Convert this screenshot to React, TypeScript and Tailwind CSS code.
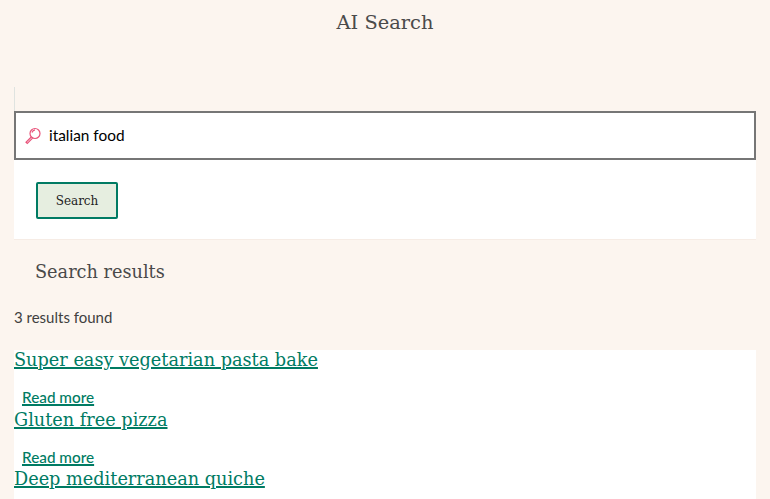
const serif = "font-['DejaVu_Serif',serif]";

const results = [
  { title: "Super easy vegetarian pasta bake", more: true },
  { title: "Gluten free pizza", more: true },
  { title: "Deep mediterranean quiche", more: false },
];

const SearchIcon = () => (
  <svg width="18" height="18" viewBox="0 0 18 18" fill="none" stroke="#e8537a" strokeWidth="1.2" className="shrink-0">
    <circle cx="11" cy="6.5" r="5" />
    <path d="M8 5.500c.5-1.500 1.500-2.300 3-2.600" />
    <path d="M7.300 10 2 15.200l1.300 1.300 5.300-5.300" />
  </svg>
);

export default function App() {
  return (
    <div className="h-[499px] overflow-hidden bg-[#fcf5ef] font-['Lato',sans-serif] text-[#404040]">
      <h1 className={`${serif} pt-[11px] text-center text-[19.4px] leading-6 font-light text-[#4a4a4a]`}>AI Search</h1>

      <div className="mx-[14px] mt-[52px]">
        <div className="h-6 w-px bg-[#dfe3e0]"></div>
        <div className="border-b border-[#f6ece5] bg-white">
          <div className="flex h-[49px] items-center gap-[7px] border-2 border-[#767676] pl-[8px]">
            <SearchIcon />
            <span className="text-[15.400px] text-black">italian food</span>
          </div>
          <div className="pt-[22px] pb-[20px] pl-[22px]">
            <button className={`${serif} h-[37px] w-[82px] rounded-[2px] border-2 border-[#007b63] bg-[#e6eee0] text-[12px] text-[#222]`}>
              Search
            </button>
          </div>
        </div>
      </div>

      <h2 className={`${serif} mt-[20px] pl-[35px] text-[17.700px] leading-6 font-light text-[#4a4a4a]`}>Search results</h2>
      <p className="mt-[23px] pl-[14px] text-[15px] leading-5 text-[#404040]">3 results found</p>

      <ul className="mx-[14px] mt-[23px] bg-white">
        {results.map((r) => (
          <li key={r.title} className="h-[59.500px]">
            <a href="#" className={`${serif} block text-[17.700px] leading-[21px] text-[#007b63] underline decoration-[1.5px]`}>
              {r.title}
            </a>
            {r.more && (
              <a href="#" className="mt-[16px] ml-[8px] block text-[15.300px] leading-5 font-medium text-[#007b63] underline decoration-[1.5px]">
                Read more
              </a>
            )}
          </li>
        ))}
      </ul>
    </div>
  );
}
